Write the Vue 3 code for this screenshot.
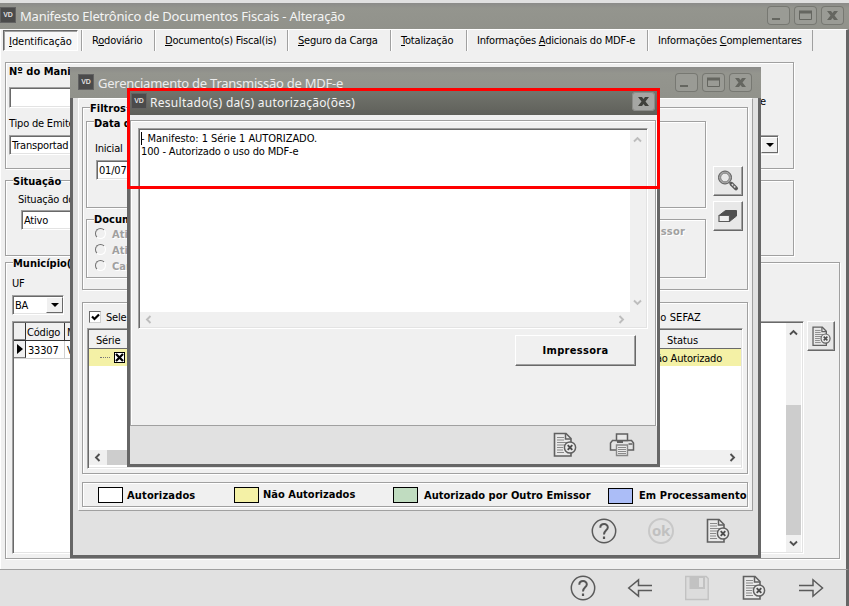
<script setup>
const tabs = [
  { pre: '', key: 'I', post: 'dentificação', w: 75, active: true },
  { pre: 'R', key: 'o', post: 'doviário', w: 73 },
  { pre: '', key: 'D', post: 'ocumento(s) Fiscal(is)', w: 133 },
  { pre: '', key: 'S', post: 'eguro da Carga', w: 103 },
  { pre: '', key: 'T', post: 'otalização', w: 76 },
  { pre: 'Informações ', key: 'A', post: 'dicionais do MDF-e', w: 181 },
  { pre: 'Informações ', key: 'C', post: 'omplementares', w: 166 },
]
const docs = [
  { label: 'Ati', end: 'ssor' },
  { label: 'Ati', end: '' },
  { label: 'Can', end: '' },
]
const legend = [
  { label: 'Autorizados', cls: 'white' },
  { label: 'Não Autorizados', cls: 'yellow' },
  { label: 'Autorizado por Outro Emissor', cls: 'green' },
  { label: 'Em Processamento', cls: 'blue' },
]
</script>

<template>
  <div class="desktop">
    <svg class="defs" width="0" height="0">
      <symbol id="i-doc" viewBox="0 0 26 26">
        <path d="M2.500 1.500h11.500l5 5v17.500H2.500z" fill="#e9e9e9" stroke="#606060" stroke-width="1.6" />
        <path d="M13.500 1.500v5.500h5.500" fill="none" stroke="#606060" stroke-width="1.500" />
        <path d="M5 5.500h7M5 8h7M5 10.500h10M5 13h8M5 15.500h6M5 18h6M5 20.500h7" stroke="#8a8a8a" stroke-width="1.200" />
        <circle cx="18" cy="15.500" r="5.600" fill="#e9e9e9" stroke="#606060" stroke-width="1.500" />
        <path d="M15.700 13.200l4.600 4.600M20.300 13.200l-4.600 4.600" stroke="#4c4c4c" stroke-width="1.900" />
      </symbol>
      <symbol id="i-help" viewBox="0 0 26 26">
        <circle cx="13" cy="13" r="11.700" fill="none" stroke="#5a5a5a" stroke-width="1.500" />
        <path d="M9.300 9.700C9.300 4.800 17 5 16.800 9.500C16.700 12.400 13 12.500 13 16.500" fill="none" stroke="#555" stroke-width="2" />
        <path d="M13 18.500v2.500" stroke="#555" stroke-width="2.200" />
      </symbol>
      <symbol id="i-left" viewBox="0 0 26 26">
        <path d="M25 10.500H11.500V4.800L1.700 13L11.500 21.200V15.500H25" fill="none" stroke="#5a5a5a" stroke-width="1.500" />
      </symbol>
      <symbol id="i-right" viewBox="0 0 26 26">
        <path d="M1 10.500H15V4.800L24.500 13L15 21.200V15.500H1" fill="none" stroke="#5a5a5a" stroke-width="1.500" />
      </symbol>
      <symbol id="i-save" viewBox="0 0 26 26">
        <path d="M1.700 1.500h20.500l2 2v21H1.700z" fill="#dcdcdc" stroke="#c2c2c2" stroke-width="1.400" />
        <path d="M5.500 2h15.500v12H5.500z" fill="#c2c2c2" />
        <path d="M15 3h4v9h-4z" fill="#dedede" />
      </symbol>
      <symbol id="i-print" viewBox="0 0 26 26">
        <path d="M3.500 8.500h19l2 2.500V18H1.500V11z" fill="#e4e4e4" stroke="#606060" stroke-width="1.500" />
        <path d="M7.500 8.500V2h11v6.500z" fill="#e9e9e9" stroke="#606060" stroke-width="1.500" />
        <path d="M8 10h6" stroke="#606060" stroke-width="2" />
        <path d="M19.500 12h4" stroke="#606060" stroke-width="1.500" />
        <path d="M7.500 13h11v10.500H7.500z" fill="#e9e9e9" stroke="#888" stroke-width="1.400" />
        <path d="M9 15.500h8M9 17.500h8M9 19.500h8M9 21.500h8" stroke="#8a8a8a" stroke-width="1.100" />
      </symbol>
      <symbol id="i-lens" viewBox="0 0 24 24">
        <path d="M13 13l2.500 2" stroke="#777" stroke-width="1.800" />
        <path d="M15.500 14.800L20 19.300" stroke="#5a5a5a" stroke-width="4" stroke-linecap="round" />
        <path d="M15.800 15L20 19.200" stroke="#ddd" stroke-width="1.500" stroke-dasharray="2 1" />
        <circle cx="9" cy="8.500" r="5.400" fill="#e8e8e8" stroke="#a5a5a5" stroke-width="2.400" />
        <circle cx="9" cy="8.500" r="6.500" fill="none" stroke="#5c5c5c" />
        <circle cx="9" cy="8.500" r="4.300" fill="none" stroke="#777" stroke-width=".8" />
      </symbol>
      <symbol id="i-eraser" viewBox="0 0 24 24">
        <path d="M3 11.500L9.500 6.500H20.500V12L13.500 17.500V11.500z" fill="#505050" stroke="#505050" />
        <path d="M3 11.500h10.500V17.500H3z" fill="#efefef" stroke="#5a5a5a" stroke-width="1.200" />
      </symbol>
      <symbol id="i-up" viewBox="0 0 9 7"><path d="M1 5.500L4.500 2L8 5.500" fill="none" stroke="currentColor" stroke-width="1.900" /></symbol>
      <symbol id="i-down" viewBox="0 0 9 7"><path d="M1 1.500L4.500 5L8 1.500" fill="none" stroke="currentColor" stroke-width="1.900" /></symbol>
      <symbol id="i-prev" viewBox="0 0 7 9"><path d="M5.500 1L2 4.500L5.500 8" fill="none" stroke="currentColor" stroke-width="1.900" /></symbol>
      <symbol id="i-next" viewBox="0 0 7 9"><path d="M1.500 1L5 4.500L1.500 8" fill="none" stroke="currentColor" stroke-width="1.900" /></symbol>
      <symbol id="i-min" viewBox="0 0 23 19"><path d="M5 13h8" stroke="currentColor" stroke-width="2" /></symbol>
      <symbol id="i-max" viewBox="0 0 23 19"><path d="M5.500 5.500h12v8h-12z" fill="none" stroke="currentColor" /><path d="M5 6h13" stroke="currentColor" stroke-width="3" /></symbol>
      <symbol id="i-close" viewBox="0 0 23 19"><path d="M6 5h4l1.500 2L13 5h4l-3.500 4.500L17 14h-4l-1.500-2L10 14H6l3.500-4.500z" fill="currentColor" /></symbol>
    </svg>

    <section class="main">
      <header class="title main-title">
        <span class="vd">VD</span>
        <span class="caption c1">Manifesto Eletrônico de Documentos Fiscais - Alteração</span>
        <span class="winbtns">
          <svg class="wb"><use href="#i-min" /></svg>
          <svg class="wb"><use href="#i-max" /></svg>
          <svg class="wb"><use href="#i-close" /></svg>
        </span>
      </header>
      <div class="main-body">
        <nav class="tabs">
          <span v-for="(t, i) in tabs" :key="i" class="tab" :class="{ active: t.active }" :style="{ width: t.w + 'px' }">{{ t.pre }}<u>{{ t.key }}</u>{{ t.post }}</span>
        </nav>

        <div class="group g1">
          <div class="g1-left">
            <b class="line">Nº do Manif</b>
            <div class="field number"></div>
            <div class="line">Tipo de Emite</div>
            <div class="field carrier">Transportad</div>
          </div>
          <div class="g1-right">
            <div class="line">e</div>
            <div class="field combo"><i class="drop"></i></div>
          </div>
        </div>

        <div class="group g2">
          <b class="legend">Situação</b>
          <div class="line">Situação do</div>
          <div class="field">Ativo</div>
        </div>

        <div class="group g3">
          <b class="legend">Município(s</b>
          <div class="line uf">UF</div>
          <div class="field combo state">BA<i class="drop"></i></div>
          <div class="cities">
            <div class="grid">
              <div class="rows">
                <div class="grow ghead"><span class="mark"></span><span class="code">Código</span><span>M</span></div>
                <div class="grow"><span class="mark"><i class="arrow"></i></span><span class="code">33307</span><span>V</span></div>
              </div>
              <div class="vscroll">
                <svg class="ch"><use href="#i-up" /></svg>
                <div class="thumb"></div>
                <svg class="ch"><use href="#i-down" /></svg>
              </div>
            </div>
            <div class="btn side"><svg width="21" height="21"><use href="#i-doc" /></svg></div>
          </div>
        </div>
      </div>
      <footer class="main-foot">
        <svg class="ico"><use href="#i-help" /></svg>
        <svg class="ico"><use href="#i-left" /></svg>
        <svg class="ico"><use href="#i-save" /></svg>
        <svg class="ico"><use href="#i-doc" /></svg>
        <svg class="ico"><use href="#i-right" /></svg>
      </footer>
    </section>

    <section class="win2">
      <header class="title t2">
        <span class="vd">VD</span>
        <span class="caption c2">Gerenciamento de Transmissão de MDF-e</span>
        <span class="winbtns">
          <svg class="wb"><use href="#i-min" /></svg>
          <svg class="wb"><use href="#i-max" /></svg>
          <svg class="wb"><use href="#i-close" /></svg>
        </span>
      </header>
      <div class="w2-body">
        <div class="w2-panel">
          <div class="group filters">
            <b class="legend">Filtros</b>
            <div class="filter-cols">
              <div>
                <div class="group date">
                  <b class="legend">Data d</b>
                  <div class="line">Inicial</div>
                  <div class="field">01/07</div>
                </div>
                <div class="group docs">
                  <b class="legend">Docum</b>
                  <div v-for="(d, i) in docs" :key="i" class="radio"><i></i><b>{{ d.label }}</b><b class="end">{{ d.end }}</b></div>
                </div>
              </div>
              <div class="tools">
                <div class="btn"><svg width="24" height="24"><use href="#i-lens" /></svg></div>
                <div class="btn"><svg width="24" height="24"><use href="#i-eraser" /></svg></div>
              </div>
            </div>
          </div>
          <div class="group list">
            <div class="list-top">
              <span class="check"><svg width="9" height="9"><path d="M1 3.500L3.500 6L8 1.500" fill="none" stroke="#000" stroke-width="2.200" /></svg></span>
              <span class="sel">Sele</span><span class="sefaz">o SEFAZ</span>
            </div>
            <div class="results">
              <div class="rhead"><span>Série</span><span class="status">Status</span></div>
              <div class="rrow"><i class="dots"></i><span class="xbox"><svg width="9" height="9"><path d="M1 1L8 8M8 1L1 8" stroke="#000" stroke-width="2.200" /></svg></span><span class="state-text">ão Autorizado</span></div>
              <div class="hscroll"><svg class="chh"><use href="#i-prev" /></svg><div class="hthumb"></div><svg class="chh"><use href="#i-next" /></svg></div>
            </div>
          </div>
          <div class="group colors">
            <div v-for="l in legend" :key="l.cls" class="color" :class="l.cls"><i></i><b>{{ l.label }}</b></div>
          </div>
        </div>
        <footer class="w2-foot">
          <svg class="ico"><use href="#i-help" /></svg>
          <span class="ok">ok</span>
          <svg class="ico"><use href="#i-doc" /></svg>
        </footer>
      </div>
    </section>

    <section class="win3">
      <header class="title t3">
        <span class="vd">VD</span>
        <span class="caption c3">Resultado(s) da(s) autorização(ões)</span>
        <span class="winbtns"><svg class="wb lit"><use href="#i-close" /></svg></span>
      </header>
      <div class="w3-body">
        <div class="w3-panel">
          <div class="memo">
            <div class="memo-text"><i class="caret"></i><div>- Manifesto: 1 Série 1 AUTORIZADO.</div><div class="second">100 - Autorizado o uso do MDF-e</div></div>
            <div class="memo-v"><svg class="ch"><use href="#i-up" /></svg><svg class="ch"><use href="#i-down" /></svg></div>
            <div class="memo-h"><svg class="chh"><use href="#i-prev" /></svg><svg class="chh"><use href="#i-next" /></svg></div>
          </div>
          <div class="btn printer"><b>Impressora</b></div>
        </div>
        <footer class="w3-foot">
          <svg class="ico"><use href="#i-doc" /></svg>
          <svg class="ico"><use href="#i-print" /></svg>
        </footer>
      </div>
    </section>
    <div class="highlight"></div>
  </div>
</template>

<style>
body { margin: 0; overflow: hidden; }
</style>

<style scoped>
* { box-sizing: border-box; }
.desktop { position: relative; width: 849px; height: 606px; overflow: hidden; font: 11px/14px "DejaVu Sans Condensed", "DejaVu Sans", sans-serif; font-stretch: condensed; letter-spacing: -0.2px; color: #000; white-space: nowrap; background: #f0f0f0; }
b { font-weight: bold; letter-spacing: 0; }
i { display: block; flex: none; }
svg { display: block; flex: none; }
.defs { position: absolute; }
.line { height: 14px; }

.title { display: flex; align-items: flex-start; background: linear-gradient(#8b8b89, #94958e 20%, #91928b); color: #f4f4f4; flex: none; }
.vd { width: 16px; height: 16px; background: #4b4b4b; border: 1px solid #626262; font: bold 7px/14px "Liberation Sans", sans-serif; letter-spacing: 0; text-align: center; color: #ddd; }
.caption { font: 13px/18px "Noto Sans", sans-serif; letter-spacing: -0.22px; }
.winbtns { display: flex; gap: 4px; margin-left: auto; }
.wb { width: 23px; height: 19px; border-radius: 4px; color: #656660; background: #9a9b95; box-shadow: inset 0 0 0 1px #777872; }
.wb.lit { background: #a5a6a3; color: #3f403b; box-shadow: inset 0 0 0 1px #8a8b87; }

.group { border: 1px solid #a0a0a0; box-shadow: 1px 1px 0 #fff, inset 1px 1px 0 #fff; }
.legend { display: block; width: max-content; height: 14px; margin-top: -6px; background: #f0f0f0; }
.field { display: flex; align-items: center; background: #fff; border: 1px solid; border-color: #a0a0a0 #fff #fff #a0a0a0; box-shadow: inset 1px 1px 0 #696969, inset -1px -1px 0 #e3e3e3; padding: 1px 0 0 2px; }
.drop { width: 17px; height: 16px; margin: -1px 0 0 auto; background: #f0f0f0; border: 1px solid; border-color: #fff #696969 #696969 #fff; display: flex; align-items: center; justify-content: center; }
.drop::after { content: ""; border: 4px solid transparent; border-top-color: #000; border-bottom: 0; }
.btn { display: flex; align-items: center; justify-content: center; width: 30px; height: 30px; background: #e8e8e8; border: 1px solid; border-color: #fff #696969 #696969 #fff; box-shadow: inset -1px -1px 0 #a0a0a0; }
.ico { width: 26px; height: 26px; }
.ch { width: 9px; height: 7px; }
.chh { width: 7px; height: 9px; }

.main { display: flex; flex-direction: column; height: 606px; border-top: 3px solid #e0e0e0; }
.main-title { height: 26px; padding: 3px 5px 0 0; }
.main-title .vd { margin-top: 1px; }
.main-title .caption { margin: 1px 0 0 4px; }
.main-body { height: 540px; padding: 1px 0 0 4px; border-top: 1px solid #fff; border-left: 1px solid #fff; border-right: 3px solid #666; }
.tabs { display: flex; height: 21px; margin-left: -2px; margin-top: -1px; }
.tab { flex: none; border-left: 1px solid #a0a0a0; box-shadow: inset 1px 0 0 #fff; padding: 4px 0 0 10px; }
.tab:last-child { border-right: 1px solid #a0a0a0; }
.tab.active { height: 21px; margin-right: 3px; padding: 4px 0 0 5px; background: #f7f7f7; border: 1px solid; border-color: #696969 #fff #fff #696969; box-shadow: inset 1px 1px 0 #a0a0a0; letter-spacing: -0.05px; }
.g1 { display: flex; width: 789px; height: 107px; margin-top: 11px; padding: 2px 14px 0 3px; }
.g1-left { width: 250px; }
.g1-left .line { display: block; }
.number { height: 21px; margin: 8px 0 9px; }
.carrier { height: 20px; margin-top: 4px; }
.g1-right { width: 130px; margin-left: auto; padding-top: 30px; }
.g1-right .line { text-align: right; padding-right: 13px; margin-bottom: 26px; }
.combo { height: 20px; }
.g2 { width: 789px; height: 76px; margin-top: 11px; }
.g2 .legend, .g3 .legend { margin-left: 7px; }
.g2 .line { margin: 4px 0 3px 12px; }
.g2 .field { width: 180px; height: 20px; margin-left: 15px; }
.g3 { width: 835px; height: 297px; margin-top: 6px; padding-left: 6px; }
.g3 .legend { margin-left: 1px; }
.uf { margin: 6px 0 4px; }
.state { width: 52px; }
.cities { display: flex; gap: 3px; margin-top: 6px; }
.grid { display: flex; width: 792px; height: 233px; background: #fff; border: 1px solid; border-color: #a0a0a0 #fff #fff #a0a0a0; box-shadow: inset 1px 1px 0 #696969, inset -1px -1px 0 #e3e3e3; padding: 1px 2px 1px 1px; }
.rows { width: 400px; }
.grow { display: flex; height: 18px; line-height: 19px; border-bottom: 1px solid #d0d0d0; }
.grow span { padding-left: 2px; }
.grow .mark { width: 12px; background: #f0f0f0; border-right: 1px solid #333; border-bottom: 1px solid #808080; padding: 3px 0 0 3px; }
.grow .code { width: 39px; border-right: 1px solid #d0d0d0; }
.ghead { background: #f0f0f0; border-color: #333; }
.ghead .code { border-color: #333; padding-left: 1px; }
.arrow { border: 5.500px solid transparent; border-left: 6px solid #000; border-right: 0; }
.vscroll { width: 15px; margin-left: auto; display: flex; flex-direction: column; align-items: center; background: #f0f0f0; padding: 6px 0 5px; color: #505050; }
.thumb { width: 15px; height: 130px; margin: 69px 0 auto; background: #cdcdcd; }
.side { width: 28px; }
.main-foot { flex: 1; display: flex; align-items: center; justify-content: flex-end; gap: 31px; padding: 0 22px 1px 0; background: #e1e1e1; border-top: 1px solid #a0a0a0; border-right: 3px solid #666; }

.win2 { position: absolute; left: 70px; top: 67px; width: 691px; height: 491px; }
.t2 { height: 31px; padding: 6px 9px 0 8px; }
.t2 .vd { margin-top: 1px; }
.t2 .caption { margin: 1px 0 0 4px; color: #ececec; letter-spacing: -0.25px; }
.w2-body { height: 460px; padding: 0 5px; background: #e1e1e1; border: 3px solid #666; border-top: 0; }
.w2-panel { width: 675px; height: 413px; background: #f0f0f0; border: 1px solid; border-color: #fff #a0a0a0 #a0a0a0 #fff; padding: 8px 3px 0; }
.filters { height: 183px; width: 666px; padding-left: 3px; }
.filters > .legend { margin-left: 4px; }
.filter-cols { display: flex; gap: 7px; padding-top: 5px; }
.date { width: 620px; height: 87px; }
.date .legend, .docs .legend { margin-left: 7px; }
.date .legend { line-height: 16px; }
.date .line { margin: 12px 0 4px 8px; }
.date .field { width: 90px; height: 20px; margin-left: 9px; }
.docs { width: 620px; height: 59px; margin-top: 11px; }
.docs .legend { height: 12px; line-height: 12px; }
.radio { display: flex; align-items: center; height: 16px; padding: 0 20px 0 8px; gap: 6px; color: #a0a0a0; text-shadow: 1px 1px 0 #fff; }
.radio b { margin-top: 1px; }
.radio i { width: 11px; height: 11px; margin-top: -2px; border-radius: 50%; border: 1px solid; border-color: #707070 #fff #fff #707070; background: #f0f0f0; }
.radio .end { margin: -5px 0 0 auto; letter-spacing: 0.2px; }
.tools { display: flex; flex-direction: column; gap: 5px; padding-top: 45px; }
.list { height: 172px; width: 666px; margin-top: 12px; padding: 7px 4px 0; }
.list-top { display: flex; align-items: center; gap: 5px; height: 14px; padding-left: 2px; }
.check { width: 12px; height: 12px; background: #fff; border: 1px solid; border-color: #696969 #d0d0d0 #d0d0d0 #696969; padding: 1px; }
.sel { padding-top: 2px; }
.sefaz { margin-left: auto; margin-right: 42px; padding-top: 2px; letter-spacing: 0.1px; }
.results { display: flex; flex-direction: column; width: 656px; height: 141px; margin-top: 4px; background: #fff; border: 1px solid; border-color: #a0a0a0 #fff #fff #a0a0a0; box-shadow: inset 1px 1px 0 #696969, inset -1px -1px 0 #e3e3e3; padding: 1px; }
.rhead { display: flex; height: 19px; padding: 4px 43px 0 7px; background: #f0f0f0; border-bottom: 1px solid #696969; }
.status { margin-left: auto; letter-spacing: -0.1px; }
.rrow { display: flex; align-items: center; height: 17px; padding: 0 19px 0 11px; background: #f4f1a6; }
.dots { width: 10px; border-top: 1px dotted #777; margin-right: 4px; }
.xbox { width: 11px; height: 11px; background: #fff; border: 1px solid #000; }
.state-text { margin-left: auto; padding-top: 2px; }
.hscroll { display: flex; align-items: center; height: 15px; margin-top: auto; margin-bottom: 2px; padding: 0 5px; background: #f0f0f0; color: #505050; }
.hthumb { width: 300px; height: 15px; margin: 0 auto 0 6px; background: #cdcdcd; }
.colors { display: flex; height: 25px; width: 666px; margin-top: 8px; padding: 4px 0 0 15px; }
.color { display: flex; flex: none; height: 16px; }
.color i { width: 25px; height: 16px; border: 1px solid #000; }
.color b { margin: 2px 0 0 4px; letter-spacing: 0.03px; }
.white { width: 136px; }
.white i { background: #fff; }
.white b { letter-spacing: 0.15px; }
.yellow { width: 159px; }
.yellow i { background: #f4f1a6; }
.yellow b { margin-top: 1px; }
.green { width: 215px; }
.green i { background: #c0dcc0; }
.green b { margin-left: 6px; }
.blue i { background: #abbdf7; margin-top: 1px; }
.blue b { margin-left: 6px; letter-spacing: 0.1px; }
.w2-foot { display: flex; align-items: center; justify-content: flex-end; gap: 31px; height: 40px; padding-right: 22px; }
.ok { width: 26px; height: 26px; border: 2px solid #c8c8c8; border-radius: 50%; font: bold 15px/20px "Open Sans", sans-serif; text-align: center; color: #c0c0c0; letter-spacing: -0.4px; }

.win3 { position: absolute; left: 127px; top: 89px; width: 533px; height: 378px; }
.t3 { height: 26px; padding: 3px 5px 0 4px; background: linear-gradient(#74766f, #5f605a); }
.t3 .vd { margin-top: 1px; }
.t3 .caption { margin: 2px 0 0 3px; font-size: 12px; letter-spacing: 0.28px; }
.w3-body { height: 352px; padding-top: 5px; background: #f0f0f0; border: 3px solid #666; border-top: 0; }
.w3-panel { width: 526px; height: 306px; border: 1px solid #a0a0a0; box-shadow: inset 1px 1px 0 #fff, 1px 1px 0 #fff; padding: 7px 7px 0; }
.memo { display: grid; grid-template: 182px 15px / 490px 15px; width: 510px; height: 201px; background: #f0f0f0; border: 1px solid; border-color: #a0a0a0 #fff #fff #a0a0a0; box-shadow: inset 1px 1px 0 #696969, inset -1px -1px 0 #e3e3e3; padding: 1px; }
.memo-text { position: relative; background: #fff; padding: 2px 0 0 1px; line-height: 13px; letter-spacing: -0.06px; }
.second { letter-spacing: -0.15px; }
.caret { position: absolute; left: 1px; top: 2px; width: 1px; height: 13px; background: #000; }
.memo-v { display: flex; flex-direction: column; align-items: center; justify-content: space-between; padding: 6px 0; color: #bdbdbd; }
.memo-h { display: flex; align-items: center; justify-content: space-between; padding: 0 5px; color: #bdbdbd; }
.printer { width: 121px; height: 31px; margin: 6px 0 0 377px; background: #f0f0f0; }
.printer b { letter-spacing: 0.3px; padding-top: 1px; }
.w3-foot { display: flex; align-items: center; justify-content: flex-end; gap: 31px; height: 38px; padding-right: 22px; background: #e1e1e1; }
.highlight { position: absolute; left: 127px; top: 88px; width: 533px; height: 101px; border: 3px solid #f00; }
</style>
